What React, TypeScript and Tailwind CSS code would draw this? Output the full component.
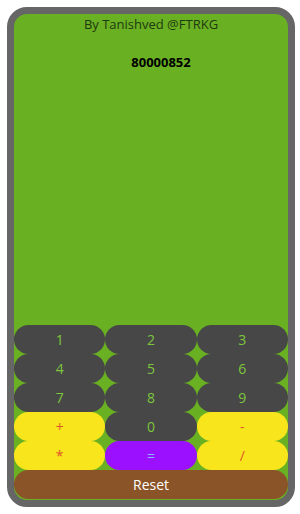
import React from "react";

const btn = "flex items-center justify-center h-[29px] rounded-[15px] text-[14px]";

export default function App() {
  const nums = ["1", "2", "3", "4", "5", "6", "7", "8", "9"];
  return (
    <div className="w-[300px] h-[514px] bg-white pt-[7px] pl-[7px]" style={{ fontFamily: '"Open Sans", "Noto Sans", sans-serif' }}>
      <div className="w-[288px] h-[500px] border-[7px] border-[#666666] rounded-[20px] bg-[#6ab023] flex flex-col overflow-hidden">
        <div className="flex-1 flex flex-col items-center">
          <div className="text-[13px] leading-[18px] text-[#1e3a10] mt-[1px]">By Tanishved @FTRKG</div>
          <div className="text-[13px] font-bold text-black mt-[20px] ml-[20px]">80000852</div>
        </div>
        <div className="grid grid-cols-3 mb-[1px]">
          {nums.map((n) => (
            <div key={n} className={`${btn} bg-[#474747] text-[#7cc63c]`}>{n}</div>
          ))}
          <div className={`${btn} bg-[#f9e51c] text-[#e0552a]`}>+</div>
          <div className={`${btn} bg-[#474747] text-[#7cc63c]`}>0</div>
          <div className={`${btn} bg-[#f9e51c] text-[#e0552a]`}>-</div>
          <div className={`${btn} bg-[#f9e51c] text-[#e0552a]`}>*</div>
          <div className={`${btn} bg-[#9a10ff] text-[#8fb4ff]`}>=</div>
          <div className={`${btn} bg-[#f9e51c] text-[#e0552a]`}>/</div>
          <div className={`${btn} col-span-3 bg-[#8b5428] text-white`}>Reset</div>
        </div>
      </div>
    </div>
  );
}
